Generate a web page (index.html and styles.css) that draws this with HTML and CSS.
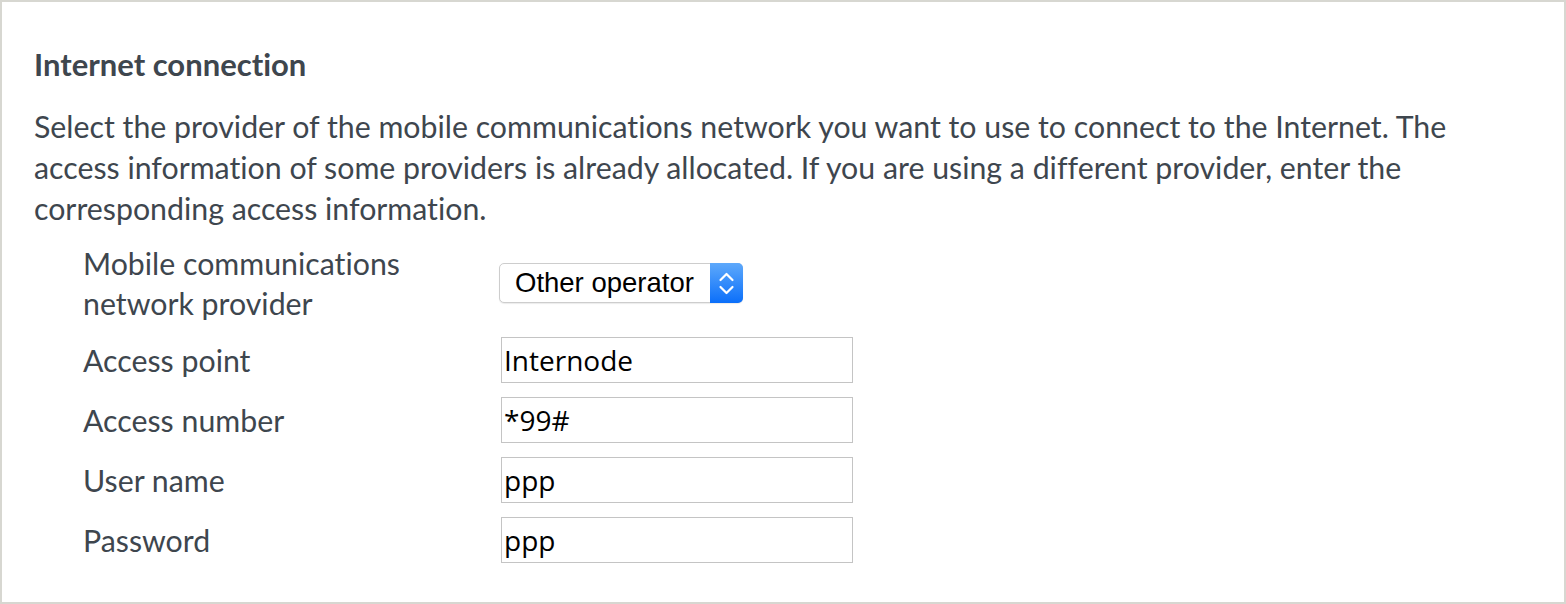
FILE: index.html
```html
<!DOCTYPE html>
<html lang="en">
<head>
<meta charset="utf-8">
<title>Internet connection</title>
<link rel="stylesheet" href="styles.css">
</head>
<body>
<div class="panel">
  <h2 class="title">Internet connection</h2>
  <p class="desc">Select the provider of the mobile communications network you want to use to connect to the Internet. The access information of some providers is already allocated. If you are using a different provider, enter the corresponding access information.</p>
  <div class="form">
    <div class="label">Mobile communications<br>network provider</div>
    <div class="field">
      <div class="select">
        <span class="select-text">Other operator</span>
        <span class="arrows">
          <svg width="33" height="40" viewBox="0 0 33 40" aria-hidden="true">
            <path d="M10.5 17 L16.5 11 L22.5 17" fill="none" stroke="#fff" stroke-width="2.2" stroke-linecap="round" stroke-linejoin="round"/>
            <path d="M10.5 24 L16.5 30 L22.5 24" fill="none" stroke="#fff" stroke-width="2.2" stroke-linecap="round" stroke-linejoin="round"/>
          </svg>
        </span>
      </div>
    </div>
    <div class="label">Access point</div>
    <div class="field"><div class="input">Internode</div></div>
    <div class="label">Access number</div>
    <div class="field"><div class="input">*99#</div></div>
    <div class="label">User name</div>
    <div class="field"><div class="input">ppp</div></div>
    <div class="label">Password</div>
    <div class="field"><div class="input">ppp</div></div>
  </div>
</div>
</body>
</html>
```
FILE: styles.css
```css
html, body {
  margin: 0;
  padding: 0;
  background: #ffffff;
}

.panel {
  box-sizing: border-box;
  width: 1566px;
  height: 604px;
  border: 2px solid #d7d7d1;
  padding: 42px 0 0 32px;
  font-family: "Lato", "Open Sans", sans-serif;
  font-variant-ligatures: none;
  color: #3e464e;
}

.title {
  margin: 0;
  font-size: 31px;
  font-weight: 700;
  line-height: 40px;
}

.desc {
  margin: 22px 0 0 0;
  width: 1450px;
  font-size: 30.3px;
  line-height: 41px;
}

.form {
  margin-top: 14px;
  padding-left: 49px;
  display: grid;
  grid-template-columns: 417px 1fr;
  row-gap: 14px;
}

.label {
  font-size: 30.3px;
  line-height: 40px;
  align-self: center;
}

.field {
  display: flex;
  align-items: center;
}

.input {
  box-sizing: border-box;
  width: 352px;
  height: 46px;
  margin-left: 1px;
  border: 1px solid #c4c4c4;
  padding-left: 2px;
  display: flex;
  align-items: center;
  font-family: "Open Sans", sans-serif;
  font-size: 28px;
  color: #000;
}

.select {
  box-sizing: border-box;
  width: 244px;
  height: 40px;
  margin-left: -1px;
  border: 1px solid #cdcdcd;
  border-radius: 5px;
  display: flex;
  align-items: center;
  justify-content: space-between;
  background: #fff;
  box-shadow: 0 1px 1px rgba(0, 0, 0, 0.08);
}

.select-text {
  padding-left: 15px;
  font-family: "Liberation Sans", Arial, sans-serif;
  font-size: 27.5px;
  color: #000;
}

.arrows {
  width: 33px;
  height: 40px;
  margin: -1px -1px -1px 0;
  border-radius: 0 5px 5px 0;
  background: linear-gradient(#5ea9fb, #0b6ffa);
  display: flex;
}
```
